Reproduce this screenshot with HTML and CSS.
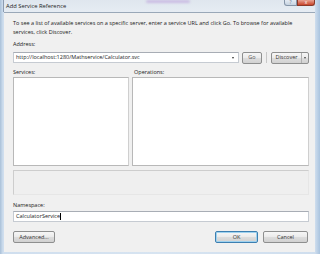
FILE: index.html
```html
<!DOCTYPE html>
<html>
<head>
<meta charset="utf-8">
<link rel="stylesheet" href="styles.css">
</head>
<body>
<div class="window">
  <div class="titlebar">
    <span class="title">Add Service Reference</span>
    <div class="glass-blur"></div>
    <div class="caption">
      <div class="cap-btn help">?</div>
      <div class="cap-btn close">x</div>
    </div>
  </div>
  <div class="client">
    <p class="intro">To see a list of available services on a specific server, enter a service URL and click Go. To browse for available services, click Discover.</p>
    <div class="label">Address:</div>
    <div class="address-row">
      <div class="combo">
        <span class="combo-text">http://localhost:1280/Mathservice/Calculator.svc</span>
        <span class="combo-arrow"></span>
      </div>
      <div class="btn go">Go</div>
      <div class="sep"></div>
      <div class="btn discover"><span class="disc-text">Discover</span><span class="disc-arrow"><span class="arrow-sm"></span></span></div>
    </div>
    <div class="panes">
      <div class="pane services">
        <div class="label">Services:</div>
        <div class="listbox"></div>
      </div>
      <div class="pane operations">
        <div class="label">Operations:</div>
        <div class="listbox"></div>
      </div>
    </div>
    <div class="status"></div>
    <div class="label ns-label">Namespace:</div>
    <div class="textbox"><span>CalculatorService</span><span class="caret"></span></div>
    <div class="footer">
      <div class="btn advanced">Advanced...</div>
      <div class="spacer"></div>
      <div class="btn ok">OK</div>
      <div class="btn cancel">Cancel</div>
    </div>
  </div>
</div>
</body>
</html>
```
FILE: styles.css
```css
html, body {
  margin: 0;
  padding: 0;
  width: 320px;
  height: 254px;
  overflow: hidden;
  background: #c9d9ea;
}
.window {
  width: 320px;
  height: 254px;
  display: flex;
  flex-direction: column;
  background: linear-gradient(90deg, #a9c0d8 0px, #cfdeee 3px, #d7e4f1 50%, #cfdeee 315px, #a9c3de 320px);
  font-family: "Open Sans", "Noto Sans", sans-serif;
  font-size: 5.5px;
  color: #1a1a1a;
}
.titlebar {
  height: 12px;
  display: flex;
  align-items: flex-start;
  position: relative;
  background: linear-gradient(180deg, #dfe6ee, #e6ecf3);
  margin: 0 5px 0 3px;
  border-left: 1px solid #8b9bb0;
  box-sizing: border-box;
}
.title {
  margin: 3px 0 0 2px;
  line-height: 7px;
  font-size: 5.8px;
  color: #222;
}
.glass-blur {
  position: absolute;
  left: 142px;
  top: 0;
  width: 44px;
  height: 3px;
  border-radius: 2px;
  background: #cbbde3;
  filter: blur(1.2px);
}
.caption {
  margin-left: auto;
  display: flex;
  height: 6px;
}
.cap-btn {
  height: 6px;
  box-sizing: border-box;
  border: 1px solid #8595a8;
  border-top: none;
  font-size: 5px;
  line-height: 5px;
  text-align: center;
  color: #fff;
}
.help {
  width: 13px;
  background: linear-gradient(180deg, #e4ebf3, #c6d3e1);
  color: #6b7c90;
  border-radius: 0 0 0 3px;
}
.close {
  width: 18px;
  background: linear-gradient(180deg, #e8a393, #c8442a);
  border-color: #8a3a2a;
  border-radius: 0 0 3px 0;
}
.client {
  flex: 1;
  margin: 0 5px 2px 4px;
  background: #f0f0f0;
  border-top: 1px solid #9aa8b8;
  padding: 6px 6px 0 9px;
  display: flex;
  flex-direction: column;
}
.intro {
  margin: 0;
  line-height: 9px;
}
.label {
  line-height: 9px;
}
.intro + .label {
  margin-top: 3px;
}
.address-row {
  display: flex;
  align-items: center;
  margin-top: 3px;
  height: 11px;
}
.combo {
  width: 226px;
  height: 11px;
  box-sizing: border-box;
  background: #fff;
  border: 1px solid #c6cbd2;
  border-top-color: #a8adb5;
  display: flex;
  align-items: center;
  padding-left: 2px;
}
.combo-text {
  flex: 1;
  line-height: 9px;
}
.combo-arrow {
  width: 0;
  height: 0;
  border-left: 1.5px solid transparent;
  border-right: 1.5px solid transparent;
  border-top: 2px solid #333;
  margin-right: 4px;
}
.btn {
  box-sizing: border-box;
  border: 1px solid #8e8f8f;
  border-radius: 2px;
  background: linear-gradient(180deg, #f6f6f6 0%, #ebebeb 48%, #dddddd 52%, #d1d1d1 100%);
  display: flex;
  align-items: center;
  justify-content: center;
  line-height: 9px;
  color: #333;
}
.go {
  width: 20px;
  height: 12px;
  margin-left: 3px;
  color: #555;
}
.sep {
  width: 1px;
  height: 11px;
  background: #c8c8c8;
  margin: 0 4px 0 4px;
}
.discover {
  width: 38px;
  height: 12px;
  justify-content: flex-start;
}
.disc-text {
  flex: 1;
  text-align: center;
}
.disc-arrow {
  width: 6px;
  height: 10px;
  border-left: 1px solid #b0b0b0;
  display: flex;
  align-items: center;
  justify-content: center;
}
.arrow-sm {
  width: 0;
  height: 0;
  border-left: 1.5px solid transparent;
  border-right: 1.5px solid transparent;
  border-top: 2px solid #444;
}
.panes {
  display: flex;
  gap: 3px;
  margin-top: 5px;
}
.pane {
  display: flex;
  flex-direction: column;
}
.services {
  width: 116px;
}
.operations {
  flex: 1;
}
.operations .label {
  padding-left: 2px;
}
.listbox {
  height: 89px;
  box-sizing: border-box;
  background: #fff;
  border: 1px solid #b8b8b8;
  border-right-color: #cfcfcf;
}
.status {
  height: 25px;
  margin-top: 4px;
  box-sizing: border-box;
  border: 1px solid #e6e6e6;
  border-top-color: #cdcdcd;
  border-left-color: #cdcdcd;
  background: #efefef;
}
.ns-label {
  margin-top: 6px;
}
.textbox {
  height: 11px;
  margin-top: 1px;
  box-sizing: border-box;
  background: #fff;
  border: 1px solid #c6cbd2;
  border-top-color: #a8adb5;
  padding-left: 2px;
  display: flex;
  align-items: center;
  line-height: 9px;
}
.caret {
  width: 1px;
  height: 7px;
  background: #000;
}
.footer {
  display: flex;
  align-items: center;
  margin-top: 9px;
}
.spacer {
  flex: 1;
}
.advanced {
  width: 42px;
  height: 12px;
}
.ok {
  width: 43px;
  height: 12px;
  border-color: #3c7fb1;
  box-shadow: inset 0 0 0 1px #9fd2ef;
}
.cancel {
  width: 45px;
  height: 12px;
  margin-left: 5px;
  margin-right: 1px;
}
```
